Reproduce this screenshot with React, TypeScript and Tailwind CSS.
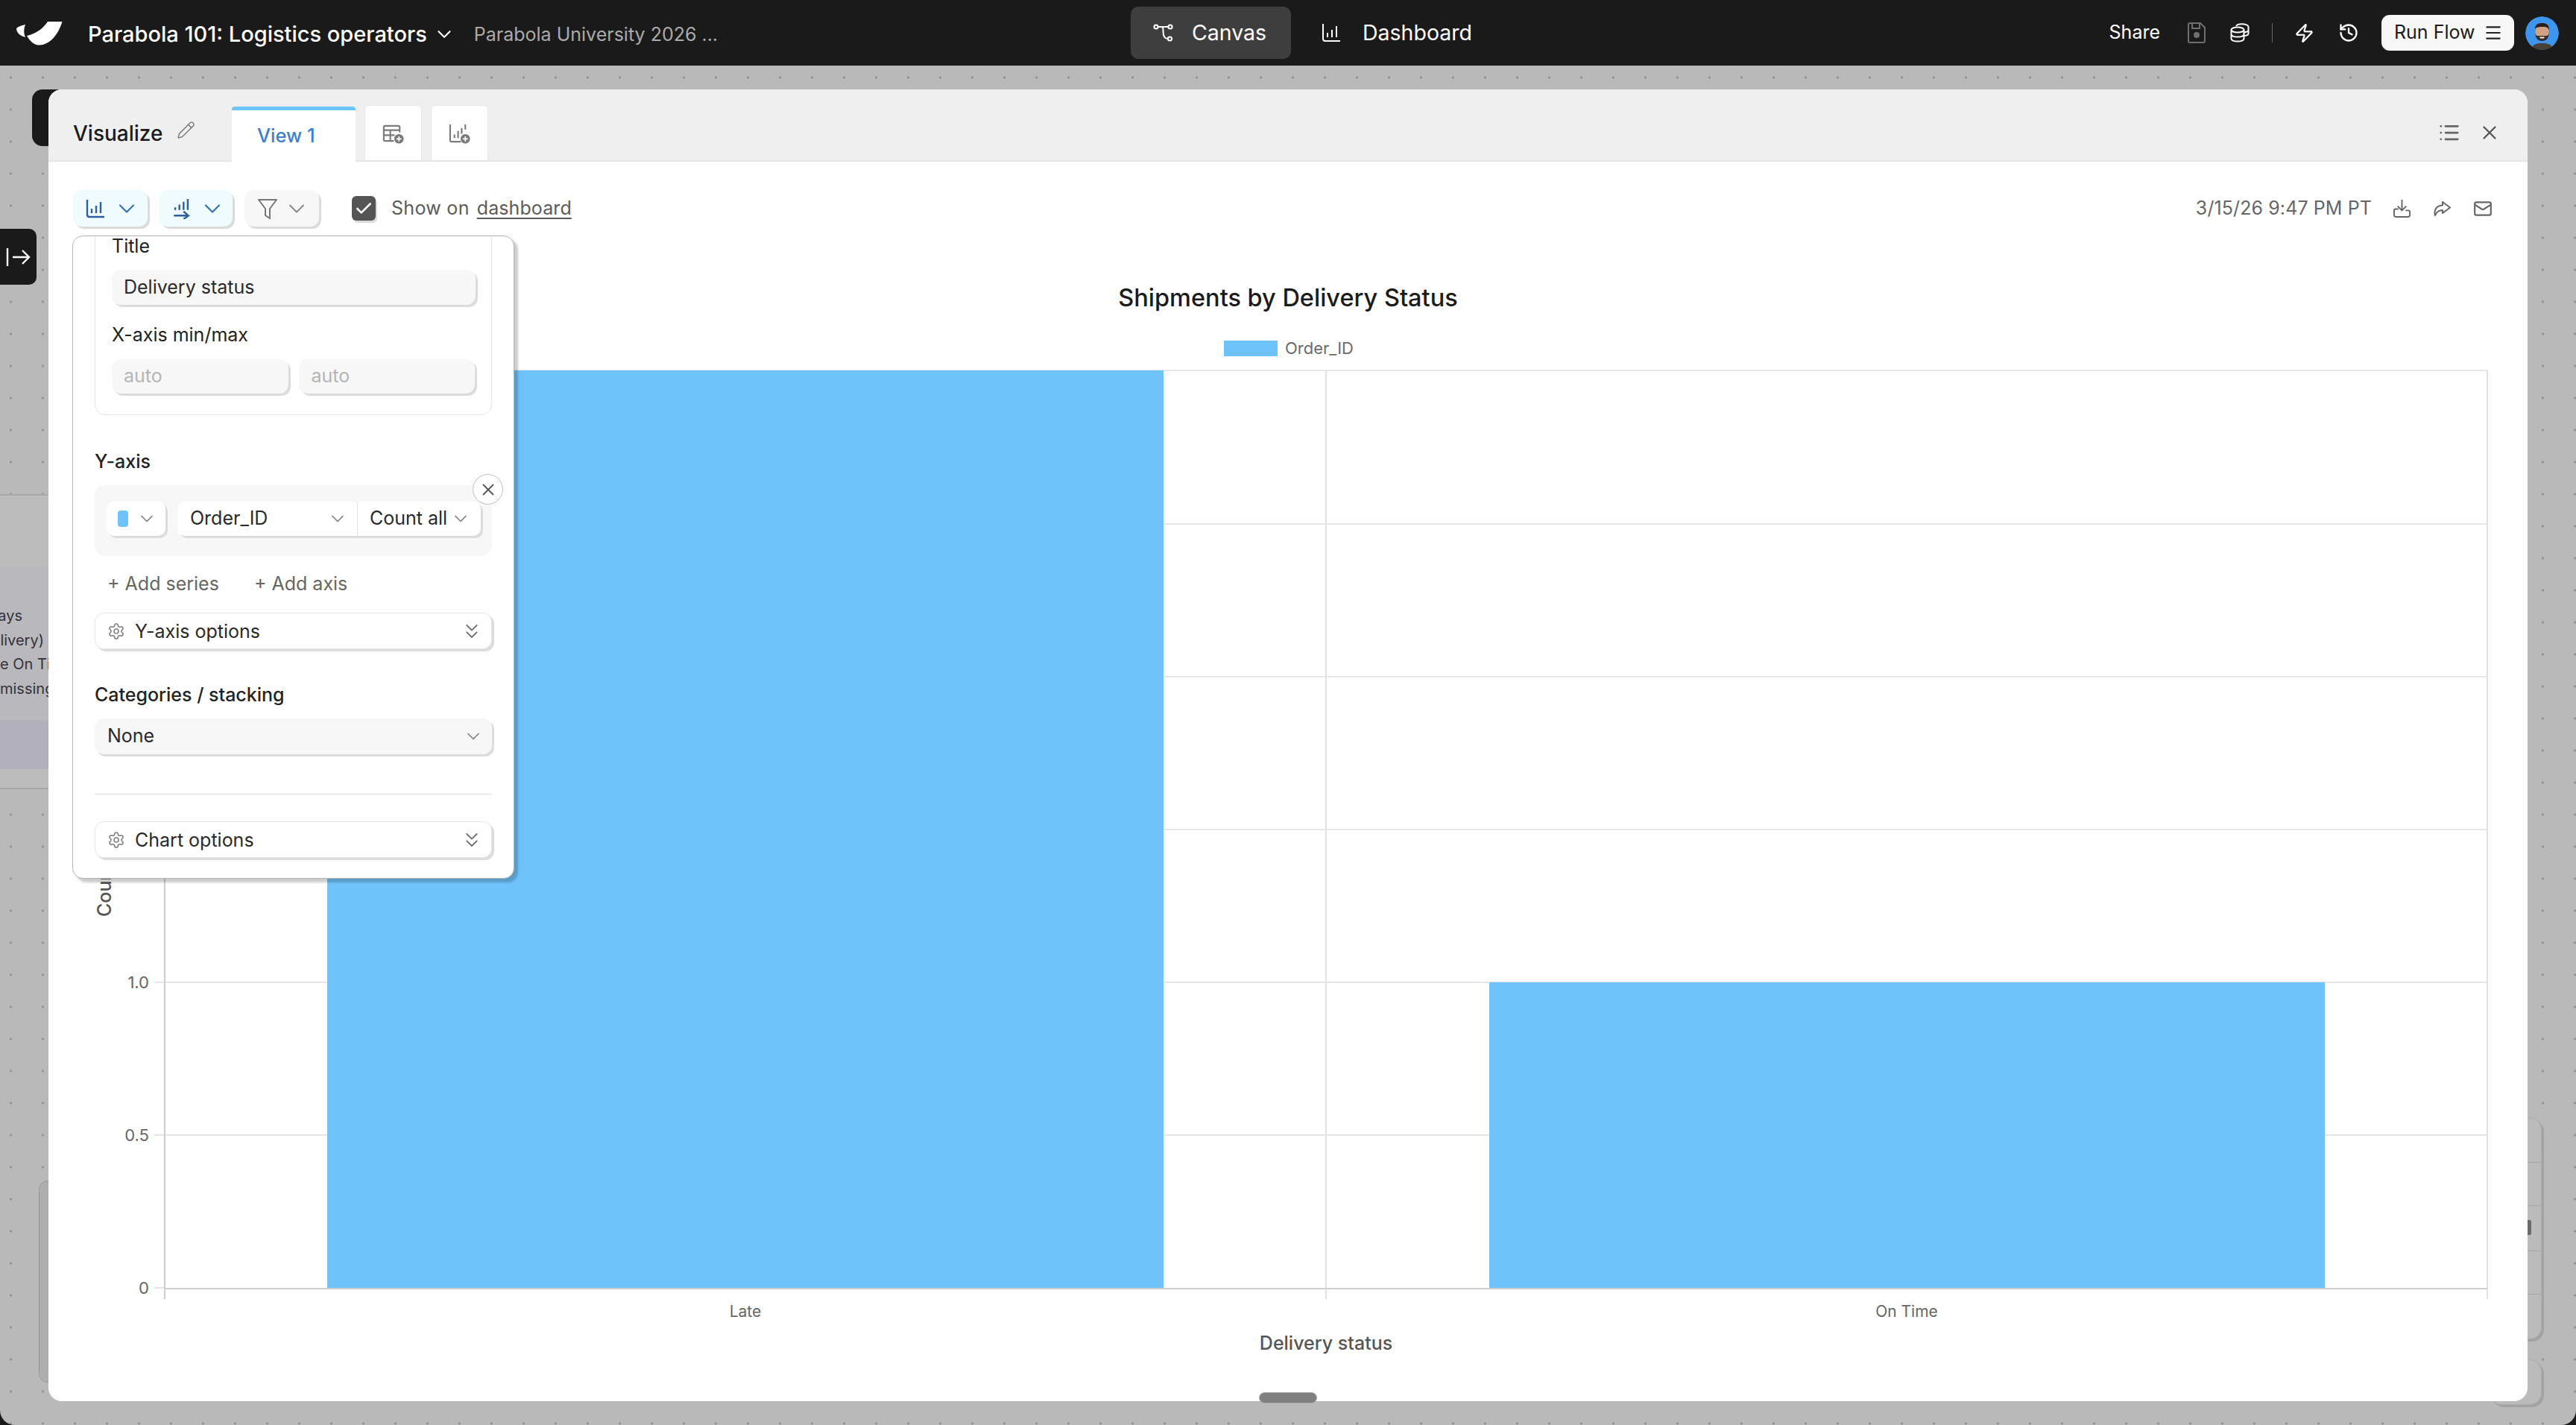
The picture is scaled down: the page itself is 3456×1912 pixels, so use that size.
import { Check, ChevronDown, ChevronsDown, History, List, Mail, Menu, Pencil, Settings, X, Zap } from "lucide-react";

const Logo = () => (
  <svg viewBox="22 29 62 33" className="w-[62px] h-[33px] mt-[3px] shrink-0" fill="#fff">
    <path d="M83.5 29 H64 C58 38 49 45 36 48 C40 55 46 60.5 52 60.5 C66 61 78 47 83.5 29Z" />
    <path d="M34 33 C28 34 24 36 22 38 C22 43 26 48 34 50 C31.5 44 32 38 34 33Z" />
  </svg>
);

const CanvasIcon = () => (
  <svg viewBox="0 0 26 24" className="w-[27px] h-[24px] shrink-0" fill="none" stroke="#fff" strokeWidth="2">
    <circle cx="3.5" cy="4" r="2.6" />
    <circle cx="22.5" cy="4" r="2.6" />
    <circle cx="22" cy="20" r="2.6" />
    <path d="M6 4H20M10 4C13 4 13 6 13 10C13 16 15 20 19.4 20" />
  </svg>
);

const BarsIcon = ({ color, w = 2, cls }: { color: string; w?: number; cls: string }) => (
  <svg viewBox="0 0 26 26" className={cls} fill="none" stroke={color} strokeWidth={w}>
    <path d="M2 1V21Q2 24 5 24H25" />
    <path d="M8 13V19M14 9V19M20 4V19" />
  </svg>
);

const SeriesIcon = () => (
  <svg viewBox="0 0 24 30" className="w-[23px] h-[28px] shrink-0" fill="none" stroke="#2c5f9e" strokeWidth="2.6">
    <path d="M3 13V17M9 9V17M15 5V17M21 1V17" />
    <path d="M1 25H21M15 19L22 25L15 30" />
  </svg>
);

const TableAddIcon = () => (
  <svg viewBox="0 0 32 32" className="w-[31px] h-[31px]" fill="none" stroke="#7a7a7a" strokeWidth="2.2">
    <path d="M17 26H5Q3 26 3 24V7Q3 5 5 5H23Q25 5 25 7V14" />
    <path d="M3 11H25M3 18H18M12 11V26" />
    <circle cx="24" cy="23" r="6.5" fill="#7a7a7a" stroke="none" />
    <path d="M24 19.5V26.5M20.5 23H27.5" stroke="#fff" strokeWidth="1.8" />
  </svg>
);

const ChartAddIcon = () => (
  <svg viewBox="0 0 32 32" className="w-[31px] h-[31px]" fill="none" stroke="#7a7a7a" strokeWidth="2.2">
    <path d="M3 3V25Q3 27 5 27H18" />
    <path d="M9 17V22M14 12V22M19 8V16M24 3V10" />
    <circle cx="24" cy="23" r="6.5" fill="#7a7a7a" stroke="none" />
    <path d="M24 19.5V26.5M20.5 23H27.5" stroke="#fff" strokeWidth="1.8" />
  </svg>
);

const SaveIcon = () => (
  <svg viewBox="0 0 24 28" className="w-[24px] h-[28px]" fill="none" stroke="#6f6f6f" strokeWidth="2">
    <path d="M3 1H17L23 7V25Q23 27 21 27H3Q1 27 1 25V3Q1 1 3 1Z" />
    <path d="M6 1V8H16V1" />
    <circle cx="12" cy="17" r="3" fill="#6f6f6f" />
  </svg>
);

const DbIcon = () => (
  <svg viewBox="0 0 26 26" className="w-[26px] h-[26px]" fill="none" stroke="#fff" strokeWidth="2">
    <ellipse cx="10" cy="9" rx="8.5" ry="3.6" />
    <path d="M1.5 9V21C1.5 23 5 24.6 10 24.6S18.5 23 18.5 21V9M1.5 15C1.5 17 5 18.6 10 18.6S18.5 17 18.5 15" />
    <path d="M8 4C9 2 12 1.2 15.5 1.2C21 1.2 24.5 3 24.5 5V14C24.5 15.4 22.5 16.6 19 17M24.5 9.5C24.5 11 22 12 19 12.4" />
  </svg>
);

const DownloadIcon = () => (
  <svg viewBox="0 0 24 26" className="w-[23px] h-[25px]" fill="none" stroke="#666" strokeWidth="2">
    <path d="M12 1V15M6 10L12 16L18 10" />
    <path d="M7 14H3Q1 14 1 16V22Q1 25 4 25H20Q23 25 23 22V18Q23 16 21 16H17" />
  </svg>
);

const ShareIcon = () => (
  <svg viewBox="0 0 24 24" className="w-[24px] h-[24px]" fill="none" stroke="#666" strokeWidth="2" strokeLinejoin="round">
    <path d="M13 3L23 10.5L13 18V14C8 14 5 16 3 21C1 14 5 7.5 13 7.5Z" />
  </svg>
);

const Avatar = () => (
  <svg viewBox="0 0 45 45" className="w-[45px] h-[45px] rounded-full ml-[15px] shrink-0">
    <circle cx="22.5" cy="22.5" r="22.5" fill="#3d95ec" />
    <path d="M8 46C9 37 15 36 22.5 36S36 37 38 46Z" fill="#4a4034" />
    <ellipse cx="22.5" cy="21" rx="9" ry="11" fill="#d3a184" />
    <path d="M13 17C13 10 18 9 23 9S32 11 32 18C30 14 27 14 23 14S15 14 13 17Z" fill="#2b211c" />
    <path d="M13.5 23C15 27 16 26 19 26H26C29 26 30 27 31.5 23C31.5 30 27 33 22.5 33S13.5 30 13.5 23Z" fill="#3a2c25" />
    <path d="M19 27.5H26L25 29.5H20Z" fill="#f5efe8" />
  </svg>
);

const Chev = ({ color = "#808080", size = 28, sw = 1.5 }: { color?: string; size?: number; sw?: number }) => (
  <ChevronDown size={size} color={color} strokeWidth={sw} className="shrink-0" />
);

const ToolBtn = ({ children, cls }: { children: React.ReactNode; cls: string }) => (
  <div className={`h-[49px] flex items-center rounded-[12px] shadow-[3px_3px_0_#dcdcdc] ${cls}`}>{children}</div>
);

const OptionRow = ({ label, cls }: { label: string; cls: string }) => (
  <div className={`h-[49px] flex items-center pl-[16px] pr-[10px] bg-white border border-[#e6e6e6] rounded-[12px] shadow-[3px_3px_0_#dcdcdc] ${cls}`}>
    <Settings size={24} color="#808080" strokeWidth={1.6} className="shrink-0" />
    <span className="ml-[13px] text-[25px] leading-[30px] text-[#2a2a2a]">{label}</span>
    <ChevronsDown size={32} color="#707070" strokeWidth={1.4} className="ml-auto" />
  </div>
);

const INPUT = "flex items-center rounded-[12px] bg-[#f7f7f7] shadow-[3px_3px_0_#dcdcdc] text-[25px]";

const Popup = () => (
  <div className="absolute left-[32px] top-[196px] z-20 w-[593px] h-[863px] overflow-hidden bg-white border border-[#b4b4b4] rounded-[14px] shadow-[5px_5px_3px_rgba(0,0,0,0.2)] pl-[29px] pr-[29px] text-[#222]">
    <div className="w-[533px] -mt-[18px] pt-[16px] pb-[28px] px-[22px] border border-[#e4e4e4] rounded-[14px]">
      <div className="text-[25px] leading-[28px]">Title</div>
      <div className={`${INPUT} mt-[18px] h-[47px] pl-[16px] w-[488px] text-[#2a2a2a]`}>Delivery status</div>
      <div className="mt-[26px] text-[25px] leading-[28px]">X-axis min/max</div>
      <div className="mt-[19px] flex gap-[14px]">
        <div className={`${INPUT} h-[46px] w-[237px] pl-[16px] text-[#b5b5b5]`}>auto</div>
        <div className={`${INPUT} h-[46px] w-[237px] pl-[17px] text-[#b5b5b5]`}>auto</div>
      </div>
    </div>
    <div className="mt-[48px] text-[25px] leading-[28px] font-medium">Y-axis</div>
    <div className="relative mt-[18px] w-[533px] h-[95px] rounded-[14px] bg-[#f7f7f7] pt-[22px] pl-[16px] flex">
      <div className="w-[79px] h-[46px] bg-white rounded-[10px] shadow-[3px_3px_0_#dcdcdc] flex items-center pl-[15px]">
        <span className="w-[14px] h-[22px] rounded-[4px] bg-[#6fc3fb]" />
        <span className="ml-[11px]"><Chev /></span>
      </div>
      <div className="ml-[16px] w-[407px] h-[46px] bg-white rounded-[10px] shadow-[3px_3px_0_#dcdcdc] flex items-center text-[25px] text-[#2a2a2a]">
        <div className="w-[242px] h-full flex items-center pl-[17px] pr-[12px] border-r border-[#e4e4e4]">
          Order_ID
          <span className="ml-auto"><Chev /></span>
        </div>
        <div className="flex-1 flex items-center pl-[16px] whitespace-nowrap">
          Count all
          <span className="ml-[4px]"><Chev /></span>
        </div>
      </div>
      <div className="absolute left-[507px] -top-[15px] w-[41px] h-[41px] rounded-full bg-white border border-[#bdbdbd] flex items-center justify-center">
        <X size={26} color="#555" strokeWidth={1.7} />
      </div>
    </div>
    <div className="mt-[24px] h-[28px] pl-[17px] flex items-center text-[25px] text-[#666]">
      <span>+ Add series</span>
      <span className="ml-[47px]">+ Add axis</span>
    </div>
    <OptionRow label="Y-axis options" cls="mt-[24px] w-[533px]" />
    <div className="mt-[47px] text-[25px] leading-[28px] font-medium">Categories / stacking</div>
    <div className={`${INPUT} mt-[18px] h-[48px] w-[533px] pl-[17px] pr-[11px] text-[#2a2a2a]`}>
      None
      <span className="ml-auto"><Chev /></span>
    </div>
    <div className="mt-[53px] w-[533px] h-px bg-[#dedede]" />
    <OptionRow label="Chart options" cls="mt-[36px] w-[533px]" />
  </div>
);

const yTicks: [string, number][] = [["0", 1728], ["0.5", 1523], ["1.0", 1318], ["1.5", 1113], ["2.0", 908], ["2.5", 703], ["3.0", 497]];

const Plot = () => (
  <svg viewBox="65 490 3326 1390" className="block w-[3326px] h-[1390px] mt-[8px]" fontFamily="Inter, sans-serif">
    {yTicks.slice(1).map(([, y]) => (
      <rect key={y} x="207" y={y - 1} width="3130" height="2" fill="#e6e6e6" />
    ))}
    <rect x="207" y="1727" width="14" height="2" fill="#e6e6e6" />
    <rect x="1778" y="497" width="2" height="1246" fill="#e2e2e2" />
    <rect x="3336" y="497" width="2" height="1246" fill="#e2e2e2" />
    <rect x="439" y="497" width="1122" height="1231" fill="#6fc3fb" />
    <rect x="1998" y="1318" width="1121" height="410" fill="#6fc3fb" />
    <rect x="220" y="497" width="2" height="1246" fill="#cdcdcd" />
    <rect x="221" y="1728" width="3116" height="2" fill="#cfcfcf" />
    {yTicks.map(([t, y]) => (
      <text key={t} x="200" y={y} textAnchor="end" dominantBaseline="central" fontSize="22" fill="#666">{t}</text>
    ))}
    <text x="1000" y="1759" textAnchor="middle" dominantBaseline="central" fontSize="21" fill="#666">Late</text>
    <text x="2558" y="1759" textAnchor="middle" dominantBaseline="central" fontSize="21" fill="#666">On Time</text>
    <text x="1779" y="1802" textAnchor="middle" dominantBaseline="central" fontSize="25" fontWeight="500" fill="#555">Delivery status</text>
    <text transform="translate(149 1230) rotate(-90)" fontSize="25" fontWeight="500" fill="#555">Count</text>
  </svg>
);

const Modal = () => (
  <div className="absolute left-[65px] top-[32px] z-10 w-[3326px] h-[1760px] rounded-[18px] bg-white flex flex-col">
    <div className="h-[97px] shrink-0 rounded-t-[18px] bg-[#efefef] border-b-2 border-[#e6e6e6] flex items-end relative">
      <div className="w-[246px] h-[74px] shrink-0 flex items-center pl-[33px] pt-[2px]">
        <span className="text-[28px] font-medium text-[#1b1b1b]">Visualize</span>
        <Pencil size={25} color="#808080" strokeWidth={1.5} className="ml-[19px] -mt-[10px]" />
      </div>
      <div className="w-[166px] h-[74px] -mb-[2px] bg-white rounded-t-[4px] border-t-[5px] border-[#6fc3fb] flex items-center pl-[34px] text-[25.5px] font-medium text-[#3b7fd0]">View 1</div>
      <div className="ml-[12px] w-[77px] h-[74px] pt-[2px] bg-white rounded-t-[6px] border border-b-0 border-[#e8e8e8] flex items-center justify-center">
        <TableAddIcon />
      </div>
      <div className="ml-[12px] w-[77px] h-[74px] pt-[2px] bg-white rounded-t-[6px] border border-b-0 border-[#e8e8e8] flex items-center justify-center">
        <ChartAddIcon />
      </div>
      <div className="ml-auto h-[74px] pr-[36px] flex items-center gap-[24px]">
        <List size={30} color="#666" strokeWidth={2.2} />
        <X size={30} color="#555" strokeWidth={1.8} />
      </div>
    </div>
    <div className="relative flex-1 flex flex-col">
      <div className="mt-[38px] h-[49px] shrink-0 pl-[33px] flex items-center">
        <ToolBtn cls="w-[100px] bg-[#f0fbff] pl-[17px]">
          <BarsIcon color="#2c5f9e" w={2.4} cls="w-[26px] h-[26px] shrink-0" />
          <span className="ml-[11px]"><Chev color="#2c6db0" size={36} sw={1.4} /></span>
        </ToolBtn>
        <ToolBtn cls="ml-[15px] w-[99px] bg-[#f0fbff] pl-[19px]">
          <SeriesIcon />
          <span className="ml-[12px]"><Chev color="#2c6db0" size={36} sw={1.4} /></span>
        </ToolBtn>
        <ToolBtn cls="ml-[16px] w-[100px] bg-[#f7f7f7] pl-[18px]">
          <svg viewBox="0 0 26 28" className="w-[26px] h-[28px] shrink-0" fill="none" stroke="#777" strokeWidth="2" strokeLinejoin="round">
            <path d="M1 2H25L16 14V27L10 23V14Z" />
          </svg>
          <span className="ml-[8px]"><Chev color="#888" size={36} sw={1.3} /></span>
        </ToolBtn>
        <div className="ml-[44px] w-[32px] h-[33px] rounded-[6px] bg-[#555] shadow-[2px_3px_0_#dcdcdc] flex items-center justify-center">
          <Check size={26} color="#fff" strokeWidth={2.4} />
        </div>
        <span className="ml-[21px] text-[25px] tracking-[0.3px] text-[#5c5c5c]">Show on</span>
        <span className="ml-[10px] text-[25px] tracking-[0.1px] text-[#5c5c5c] underline underline-offset-[4px]">dashboard</span>
        <div className="ml-auto pr-[47px] flex items-center">
          <span className="text-[25px] tracking-[0.1px] text-[#666]">3/15/26 9:47 PM PT</span>
          <span className="ml-[29px]"><DownloadIcon /></span>
          <span className="ml-[30px]"><ShareIcon /></span>
          <span className="ml-[30px]"><Mail size={26} color="#666" strokeWidth={2} /></span>
        </div>
      </div>
      <div className="mt-[76px] h-[40px] shrink-0 text-center text-[32.5px] leading-[40px] font-medium text-[#1b1b1b]">Shipments by Delivery Status</div>
      <div className="mt-[32px] h-[30px] shrink-0 pl-[2px] flex items-center justify-center">
        <span className="w-[72px] h-[21px] bg-[#6fc3fb]" />
        <span className="ml-[10px] text-[22px] text-[#6b6b6b]">Order_ID</span>
      </div>
      <Plot />
    </div>
    <Popup />
    <div className="absolute left-[1624px] top-[1748px] w-[78px] h-[15px] rounded-full bg-[#7f7f7f] border border-[#a9a9a9]" />
  </div>
);

const LeftNode = () => (
  <div className="absolute left-0 top-[575px] w-[65px] h-[396px] overflow-hidden flex flex-col border-y-2 border-[#a9a9a9] text-[20px] leading-[32.5px] text-[#33333a]">
    <div className="h-[95px] bg-[#bcbcbc]" />
    <div className="h-[207px] bg-[#b9b8bc] pt-[50px] whitespace-nowrap">
      <div className="flex justify-end pr-[35px]">ays</div>
      <div className="flex justify-end pr-[6px]">elivery)</div>
      <div>e On Time</div>
      <div>missing</div>
    </div>
    <div className="h-[65px] bg-[#b1b0bc]" />
    <div className="flex-1 bg-[#bcbcbc]" />
  </div>
);

const RightPanels = () => (
  <>
    <div className="absolute left-[3340px] top-[1411px] w-[70px] h-[298px] rounded-[16px] bg-[#bbb] border border-[#adadad] shadow-[3px_3px_0_#a3a3a3] flex flex-col">
      {[60, 59, 61, 59, 59].map((h, i) => (
        <div key={i} className={`relative ${i < 4 ? "border-b border-[#a6a6a6]" : ""}`} style={{ height: h }} />
      ))}
      <div className="absolute left-[50px] top-[137px] w-[5px] h-[20px] rounded-r-[2px] bg-[#6a6a6a]" />
    </div>
    <div className="absolute left-[3340px] top-[1736px] w-[70px] h-[61px] rounded-[16px] bg-[#bbb] border border-[#adadad] shadow-[3px_3px_0_#a3a3a3]" />
  </>
);

export default function App() {
  return (
    <div className="relative w-[3456px] h-[1912px] overflow-hidden bg-[#1b1a1b] flex flex-col font-['Inter',sans-serif]">
      <header className="h-[88px] shrink-0 grid grid-cols-[1517px_215px_1fr] bg-[#1b1a1b] text-white">
        <div className="flex items-center pl-[22px]">
          <Logo />
          <span className="ml-[34px] mt-[4px] text-[29px] font-medium whitespace-nowrap">Parabola 101: Logistics operators</span>
          <span className="ml-[8px] mt-[4px]"><Chev color="#fff" size={30} sw={1.7} /></span>
          <span className="ml-[25px] mt-[6px] text-[25px] text-[#aaa] whitespace-nowrap">Parabola University 2026 ...</span>
        </div>
        <div className="flex items-center">
          <div className="w-[215px] h-[70px] shrink-0 rounded-[10px] bg-[#3f3e3f] flex items-center pl-[30px]">
            <CanvasIcon />
            <span className="ml-[25px] text-[28.5px]">Canvas</span>
          </div>
          <div className="ml-[41px] flex items-center shrink-0">
            <BarsIcon color="#fff" w={2} cls="w-[26px] h-[26px] shrink-0" />
            <span className="ml-[29px] text-[28.5px]">Dashboard</span>
          </div>
        </div>
        <div className="flex items-center justify-end pr-[23px]">
          <span className="text-[25px]">Share</span>
          <span className="ml-[37px] flex"><SaveIcon /></span>
          <span className="ml-[33px] flex"><DbIcon /></span>
          <span className="ml-[30px] w-px h-[26px] bg-[#666]" />
          <Zap size={27} color="#fff" strokeWidth={2} className="ml-[29px]" />
          <History size={28} color="#fff" strokeWidth={2} className="ml-[32px]" />
          <div className="ml-[30px] w-[178px] h-[48px] rounded-[11px] bg-[#f7f7f7] flex items-center pl-[17px] text-[25px] text-[#1b1b1b]">
            Run Flow
            <Menu size={26} color="#222" strokeWidth={2} className="ml-[12px]" />
          </div>
          <Avatar />
        </div>
      </header>
      <main className="relative flex-1 rounded-b-[20px] overflow-hidden bg-[#b9b9b9] bg-[radial-gradient(circle,#909090_1.2px,transparent_1.9px)] bg-[size:43px_43px] bg-[position:-7px_-5.5px]">
        <div className="absolute left-[43px] top-[32px] w-[40px] h-[76px] rounded-l-[14px] bg-[#1b1a1b]" />
        <div className="absolute left-0 top-[219px] w-[49px] h-[75px] rounded-r-[10px] bg-[#1b1a1b] flex items-center justify-center">
          <svg viewBox="0 0 34 26" className="w-[34px] h-[26px]" fill="none" stroke="#fff" strokeWidth="2.4">
            <path d="M2 1V25M9 13H31M22 4L31 13L22 22" />
          </svg>
        </div>
        <LeftNode />
        <div className="absolute left-[52px] top-[1496px] w-[60px] h-[271px] rounded-[12px] bg-[#aeaeae] border border-[#999]" />
        <RightPanels />
        <Modal />
      </main>
    </div>
  );
}
